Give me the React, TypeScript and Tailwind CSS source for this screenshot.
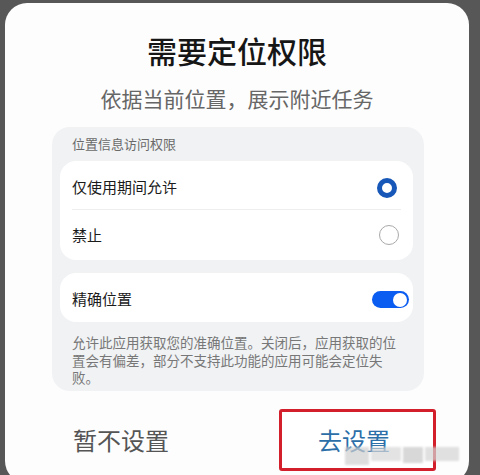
import React from 'react';

const font = { fontFamily: '"Noto Sans CJK SC", "Noto Sans", sans-serif' };

function Radio({ checked }: { checked: boolean }) {
  if (checked) {
    return <span className="block h-[20px] w-[20px] rounded-full border-[5px] border-[#1657b8] bg-white" />;
  }
  return <span className="block h-[20px] w-[20px] rounded-full border border-[#a9a9a9] bg-white" />;
}

function Toggle() {
  return (
    <span className="flex h-[17px] w-[37px] items-center justify-end rounded-full bg-[#0b5cf0] pr-[2px]">
      <span className="block h-[14px] w-[14px] rounded-full bg-white" />
    </span>
  );
}

export default function App() {
  return (
    <div className="h-[475px] w-[480px] overflow-hidden bg-[#575757] pt-[3px]" style={font}>
      <div className="relative ml-[5px] flex h-[480px] w-[464px] flex-col rounded-[22px] bg-[#fdfdfd]">
        <h1 className="pt-[28px] text-center text-[30px] font-medium leading-[39px] text-[#161616]">
          需要定位权限
        </h1>
        <p className="mt-[14px] text-center text-[21px] leading-[28px] text-[#666]">
          依据当前位置，展示附近任务
        </p>

        <div className="ml-[47px] mt-[15px] w-[372px] rounded-[18px] bg-[#f0f2f4] pb-[4px] pl-2 pr-[11px] pt-[8px]">
          <div className="pl-[12px] text-[13px] leading-[18px] text-[#6a6a6a]">位置信息访问权限</div>

          <div className="mt-[8px] rounded-[16px] bg-white px-[12px]">
            <div className="flex h-[49px] items-center justify-between border-b border-[#eceeef] pt-[5px]">
              <span className="text-[15px] text-[#1b1b1b]">仅使用期间允许</span>
              <span className="mr-[4px]"><Radio checked /></span>
            </div>
            <div className="flex h-[50px] items-center justify-between">
              <span className="text-[15px] text-[#1b1b1b]">禁止</span>
              <span className="mr-[2px]"><Radio checked={false} /></span>
            </div>
          </div>

          <div className="mt-[13px] flex h-[49px] items-center justify-between rounded-[16px] bg-white px-[12px] pt-[4px]">
            <span className="text-[15px] text-[#1b1b1b]">精确位置</span>
            <span className="mr-[-8px]"><Toggle /></span>
          </div>

          <p className="mt-[12px] pl-[12px] pr-[11px] text-[13.5px] leading-[17.5px] text-[#777]">
            允许此应用获取您的准确位置。关闭后，应用获取的位置会有偏差，部分不支持此功能的应用可能会定位失败。
          </p>
        </div>

        <div className="mt-[18px] flex">
          <div className="flex h-[62px] flex-1 items-center justify-center">
            <span className="text-[24px] text-[#555]">暂不设置</span>
          </div>
          <div className="flex flex-1 items-center justify-center">
            <button className="ml-[8px] flex h-[62px] w-[157px] items-center justify-center rounded-[3px] border-[3px] border-[#d21f2b] bg-white pr-[6px] text-[24px] text-[#2c6ea8]">
              去设置
            </button>
          </div>
        </div>

        <div className="pointer-events-none absolute left-[340px] top-[444px] flex gap-[2px] opacity-70 blur-[1px]">
          <span className="block h-[18px] w-[24px] bg-[#cfcfcf]" />
          <span className="block h-[14px] w-[30px] bg-[#d8d8d8]" />
          <span className="block h-[16px] w-[20px] bg-[#c8c8c8]" />
          <span className="block h-[14px] w-[34px] bg-[#d4d4d4]" />
        </div>
      </div>
    </div>
  );
}
